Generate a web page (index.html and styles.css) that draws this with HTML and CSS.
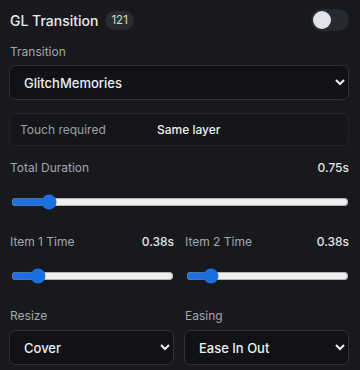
FILE: index.html
```html
<!DOCTYPE html>
<html>
<head>
<meta charset="utf-8">
<link rel="stylesheet" href="styles.css">
</head>
<body>
<div class="panel">
  <div class="header">
    <div class="title-wrap">
      <span class="title">GL Transition</span>
      <span class="badge">121</span>
    </div>
    <div class="toggle"><div class="knob"></div></div>
  </div>

  <div class="field first">
    <div class="label">Transition</div>
    <select class="select"><option>GlitchMemories</option></select>
  </div>

  <div class="info">
    <span class="info-key">Touch required</span>
    <span class="info-val">Same layer</span>
  </div>

  <div class="slider-field">
    <div class="row"><span class="label">Total Duration</span><span class="value">0.75s</span></div>
    <input class="range" type="range" min="0" max="8" step="0.01" value="0.75">
  </div>

  <div class="cols">
    <div class="slider-field">
      <div class="row"><span class="label">Item 1 Time</span><span class="value">0.38s</span></div>
      <input class="range" type="range" min="0" max="3" step="0.01" value="0.38">
    </div>
    <div class="slider-field">
      <div class="row"><span class="label">Item 2 Time</span><span class="value">0.38s</span></div>
      <input class="range" type="range" min="0" max="3.2" step="0.01" value="0.38">
    </div>
  </div>

  <div class="cols">
    <div class="field">
      <div class="label">Resize</div>
      <select class="select"><option>Cover</option></select>
    </div>
    <div class="field">
      <div class="label">Easing</div>
      <select class="select"><option>Ease In Out</option></select>
    </div>
  </div>
</div>
</body>
</html>
```

FILE: styles.css
```css
html, body {
  margin: 0;
  padding: 0;
  background: #18191d;
}
body {
  font-family: Inter, "Noto Sans", sans-serif;
  color: #e6e7ea;
  width: 360px;
  height: 370px;
  overflow: hidden;
}
.panel {
  padding: 9px 11px 0 9px;
  display: flex;
  flex-direction: column;
}
.header {
  display: flex;
  align-items: center;
  justify-content: space-between;
  height: 22px;
}
.title-wrap {
  display: flex;
  align-items: center;
  gap: 7px;
  padding-left: 1px;
}
.title {
  font-size: 14px;
  font-weight: 500;
  color: #e8e9ec;
}
.badge {
  background: #2a2c31;
  color: #d4d6db;
  font-size: 11.5px;
  border-radius: 10px;
  height: 19px;
  line-height: 19px;
  padding: 0 6px;
}
.toggle {
  width: 38px;
  height: 22px;
  border-radius: 11px;
  background: #262930;
  display: flex;
  align-items: center;
  padding-left: 2px;
  box-sizing: border-box;
}
.knob {
  width: 18px;
  height: 18px;
  border-radius: 50%;
  background: #e2e3e8;
}
.field {
  display: flex;
  flex-direction: column;
}
.label {
  font-size: 12px;
  color: #a3a6ad;
  padding-left: 1px;
}
.field.first {
  margin-top: 13px;
}
.field .label {
  height: 15px;
  line-height: 15px;
  margin-bottom: 6px;
}
.cols .field .label {
  margin-bottom: 7px;
}
.select {
  color-scheme: dark;
  height: 35px;
  background: #111215;
  border: 1px solid #2e3036;
  border-radius: 6px;
  color: #eceef1;
  font-family: Inter, "Noto Sans", sans-serif;
  font-size: 13px;
  font-weight: 500;
  padding: 0 10px;
  margin: 0;
  width: 100%;
}
.info {
  margin-top: 13px;
  height: 33px;
  box-sizing: border-box;
  border: 1px solid #222428;
  background: #151619;
  border-radius: 6px;
  display: flex;
  align-items: center;
  padding-left: 10px;
  font-size: 12px;
}
.info-key {
  color: #9da0a7;
  width: 137px;
}
.info-val {
  color: #eceef1;
  font-weight: 500;
}
.slider-field {
  display: flex;
  flex-direction: column;
}
.info + .slider-field {
  margin-top: 14px;
}
.row {
  display: flex;
  justify-content: space-between;
  align-items: center;
  height: 15px;
}
.value {
  font-size: 12px;
  font-weight: 500;
  color: #e2e4e8;
}
.range {
  accent-color: #1b6fe0;
  margin: 19px 0 0 2px;
  width: calc(100% - 2px);
  height: 16px;
}
.cols {
  display: grid;
  grid-template-columns: 1fr 1fr;
  gap: 10px;
  margin-top: 24px;
}
```
